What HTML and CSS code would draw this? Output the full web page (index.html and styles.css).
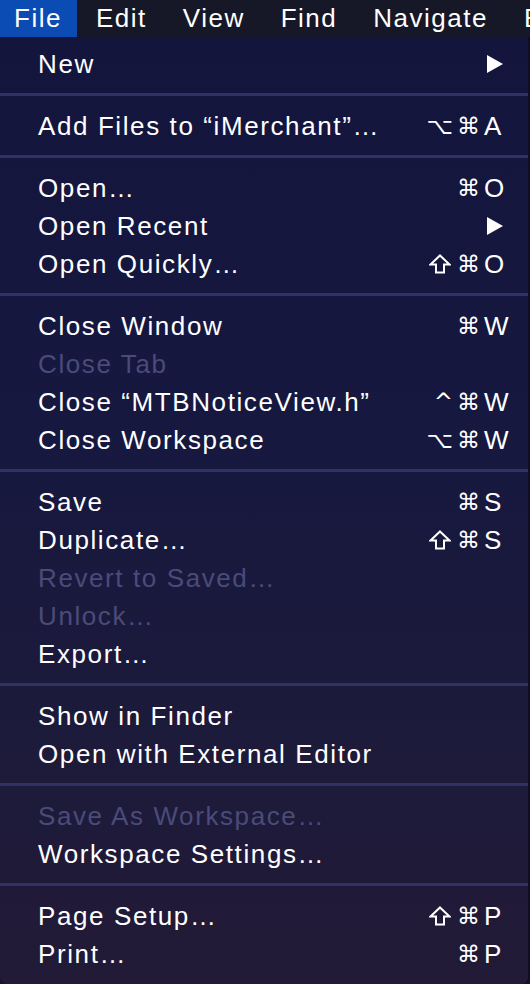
FILE: index.html
```html
<!DOCTYPE html>
<html>
<head>
<meta charset="utf-8">
<link rel="stylesheet" href="styles.css">
</head>
<body>
<div class="menubar">
  <span class="mb-item mb-first active">File</span>
  <span class="mb-item">Edit</span>
  <span class="mb-item">View</span>
  <span class="mb-item">Find</span>
  <span class="mb-item">Navigate</span>
  <span class="mb-item">Editor</span>
</div>
<div class="menu">
  <div class="row"><span class="label">New</span><span class="mods"></span><span class="key"><svg class="tri" width="16" height="18" viewBox="0 0 16 18"><polygon points="0,0 16,9 0,18" fill="#fff"/></svg></span></div>
  <div class="sep"></div>
  <div class="row"><span class="label">Add Files to “iMerchant”…</span><span class="mods">⌥⌘</span><span class="key">A</span></div>
  <div class="sep"></div>
  <div class="row"><span class="label">Open…</span><span class="mods">⌘</span><span class="key">O</span></div>
  <div class="row"><span class="label">Open Recent</span><span class="mods"></span><span class="key"><svg class="tri" width="16" height="18" viewBox="0 0 16 18"><polygon points="0,0 16,9 0,18" fill="#fff"/></svg></span></div>
  <div class="row"><span class="label">Open Quickly…</span><span class="mods"><svg class="shift" width="22" height="20" viewBox="0 0 22 20"><path d="M11 1.5 L20.5 10.5 L15 10.5 L15 18.5 L7 18.5 L7 10.5 L1.5 10.5 Z" fill="none" stroke="#fff" stroke-width="2" stroke-linejoin="miter"/></svg>⌘</span><span class="key">O</span></div>
  <div class="sep"></div>
  <div class="row"><span class="label">Close Window</span><span class="mods">⌘</span><span class="key">W</span></div>
  <div class="row disabled"><span class="label">Close Tab</span><span class="mods"></span><span class="key"></span></div>
  <div class="row"><span class="label">Close “MTBNoticeView.h”</span><span class="mods">^⌘</span><span class="key">W</span></div>
  <div class="row"><span class="label">Close Workspace</span><span class="mods">⌥⌘</span><span class="key">W</span></div>
  <div class="sep"></div>
  <div class="row"><span class="label">Save</span><span class="mods">⌘</span><span class="key">S</span></div>
  <div class="row"><span class="label">Duplicate…</span><span class="mods"><svg class="shift" width="22" height="20" viewBox="0 0 22 20"><path d="M11 1.5 L20.5 10.5 L15 10.5 L15 18.5 L7 18.5 L7 10.5 L1.5 10.5 Z" fill="none" stroke="#fff" stroke-width="2" stroke-linejoin="miter"/></svg>⌘</span><span class="key">S</span></div>
  <div class="row disabled"><span class="label">Revert to Saved…</span><span class="mods"></span><span class="key"></span></div>
  <div class="row disabled"><span class="label">Unlock…</span><span class="mods"></span><span class="key"></span></div>
  <div class="row"><span class="label">Export…</span><span class="mods"></span><span class="key"></span></div>
  <div class="sep"></div>
  <div class="row"><span class="label">Show in Finder</span><span class="mods"></span><span class="key"></span></div>
  <div class="row"><span class="label">Open with External Editor</span><span class="mods"></span><span class="key"></span></div>
  <div class="sep"></div>
  <div class="row disabled"><span class="label">Save As Workspace…</span><span class="mods"></span><span class="key"></span></div>
  <div class="row"><span class="label">Workspace Settings…</span><span class="mods"></span><span class="key"></span></div>
  <div class="sep"></div>
  <div class="row"><span class="label">Page Setup…</span><span class="mods"><svg class="shift" width="22" height="20" viewBox="0 0 22 20"><path d="M11 1.5 L20.5 10.5 L15 10.5 L15 18.5 L7 18.5 L7 10.5 L1.5 10.5 Z" fill="none" stroke="#fff" stroke-width="2" stroke-linejoin="miter"/></svg>⌘</span><span class="key">P</span></div>
  <div class="row"><span class="label">Print…</span><span class="mods">⌘</span><span class="key">P</span></div>
</div>
</body>
</html>
```

FILE: styles.css
```css
html, body {
  margin: 0;
  padding: 0;
}
body {
  width: 530px;
  height: 984px;
  overflow: hidden;
  background: #15151f;
  font-family: "Liberation Sans", Arial, sans-serif;
  color: #ffffff;
}
.menubar {
  height: 37px;
  display: flex;
  align-items: center;
  background: #161827;
  font-size: 26px;
  letter-spacing: 1.5px;
  white-space: nowrap;
  overflow: hidden;
}
.mb-item {
  height: 37px;
  line-height: 36px;
  padding: 0 17px 0 19px;
  flex: none;
}
.mb-first {
  box-sizing: border-box;
  width: 77px;
  padding-left: 14px;
}
.mb-item.active {
  background: #0b4cb4;
}
.menu {
  height: 936px;
  padding: 8px 0 3px;
  background: linear-gradient(180deg, #13153d 0%, #161840 40%, #1c1a3b 70%, #221a37 100%);
  border-right: 2px solid #0d0e22;
  border-bottom-right-radius: 7px;
  border-bottom-left-radius: 7px;
  font-size: 26px;
}
.row {
  display: grid;
  grid-template-columns: 1fr auto 26px;
  height: 38px;
  line-height: 38px;
  padding: 0 18px 0 38px;
  white-space: nowrap;
}
.label {
  letter-spacing: 1.6px;
}
.mods {
  font-family: "DejaVu Sans", sans-serif;
  font-size: 23px;
  letter-spacing: 4px;
  display: flex;
  align-items: center;
  justify-content: flex-end;
  padding-right: 0;
}
.shift {
  display: block;
  margin-right: 6px;
}
.key {
  text-align: left;
  display: flex;
  align-items: center;
}
.tri {
  display: block;
  margin-left: 3px;
}
.disabled {
  color: #4a4b7a;
}
.sep {
  height: 3px;
  margin: 10px 0 11px;
  background: #2f3262;
}
```
